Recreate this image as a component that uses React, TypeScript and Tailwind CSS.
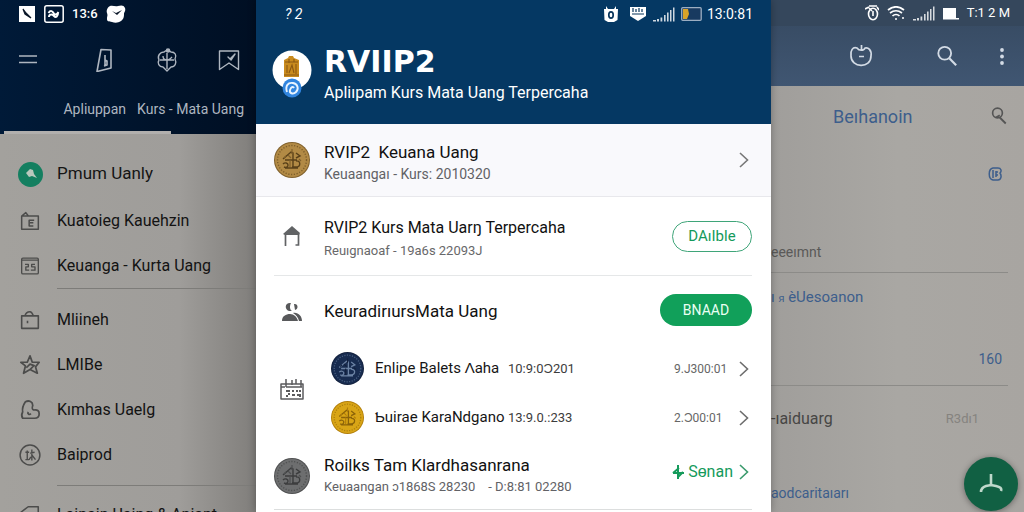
import type { ReactNode } from "react";

function Icon({ children, className = "size-6", box = 24 }: { children: ReactNode; className?: string; box?: number }) {
  return (
    <svg
      viewBox={`0 0 ${box} ${box}`}
      className={className}
      fill="none"
      stroke="currentColor"
      strokeWidth={1.6}
      strokeLinejoin="round"
      aria-hidden="true"
    >
      {children}
    </svg>
  );
}

function Signal() {
  return (
    <svg viewBox="0 0 22 15" className="h-[15px] w-[22px]" fill="currentColor" aria-hidden="true">
      <path d="M0 13h3v1.500H0zM4 12h2v2.500H4zM7.500 10.500h1.800v4H7.500zM11 8h1.600v6.500H11zM14 5.500h1.600v9H14zM17 3h1.500v11.500H17zM20 .5h1.500v14H20z" opacity=".8" />
    </svg>
  );
}

function Chevron({ className }: { className: string }) {
  return (
    <svg viewBox="0 0 10 16" className={`h-4 w-2.5 shrink-0 ${className}`} fill="none" stroke="currentColor" strokeWidth={1.6} aria-hidden="true">
      <path d="M1 1l7.500 7L1 15" />
    </svg>
  );
}

function Coin({ className, base, rim, ink }: { className: string; base: string; rim: string; ink: string }) {
  return (
    <svg viewBox="0 0 36 36" className={`shrink-0 ${className}`} fill="none" aria-hidden="true">
      <circle cx="18" cy="18" r="18" fill={rim} />
      <circle cx="18" cy="18" r="17" fill={base} />
      <circle cx="18" cy="18" r="14.500" stroke={ink} strokeWidth="1.400" strokeDasharray="1.200 1.600" opacity=".6" />
      <path d="M9 17l8-7 2 1v14M11 18h12M22 11l4 3-4 2M22 19c5-1 5 6 0 6h-4M9 22c2-2 5-1 5 1s-2 3-4 2M11 26h13" stroke={ink} strokeWidth="1.400" />
      <path d="M18 7v5M14 13l3 3M25 17l2 2M16 18v7M12 14l-2 2" stroke={rim} strokeWidth="1.200" />
    </svg>
  );
}

function MenuRow({ icon, label }: { icon: ReactNode; label: string }) {
  return (
    <li>
      <a href="#" className="flex h-[45px] items-center gap-4 whitespace-nowrap pl-[19px] text-[16px] text-[#131313]">
        <span className="flex w-[22px] justify-center text-[#4c4c4b]">{icon}</span>
        {label}
      </a>
    </li>
  );
}

function LeftPanel() {
  return (
    <aside className="min-w-0 overflow-hidden bg-linear-to-r from-[#a3a19d] via-[#9f9d9a] via-70% to-[#807e7b]">
      <header className="bg-linear-to-r from-[#001a38] to-[#000f23] text-[#aeb6c0]">
        <div className="flex h-7 items-center pl-[19px] text-white">
          <svg viewBox="0 0 16 16" className="size-4" aria-hidden="true">
            <path d="M0 0h16v16H0z" fill="#fff" />
            <path d="M4 3l3 4 5 5-6-4z" stroke="#0b1728" strokeWidth="1.200" fill="#0b1728" />
          </svg>
          <svg viewBox="0 0 20 18" className="ml-[9px] h-[18px] w-5" fill="none" stroke="#fff" aria-hidden="true">
            <rect x=".8" y=".8" width="18.400" height="16.400" rx="2" strokeWidth="1.500" />
            <path d="M4.500 8c2-3 4-2 5 0s3 2 5-1M5 12c0-3 3-3 5-1s4 0 4-3" strokeWidth="2" />
          </svg>
          <span className="ml-2 text-[13px] font-medium">13:6</span>
          <svg viewBox="0 0 20 18" className="ml-2 h-[18px] w-5" aria-hidden="true">
            <path d="M4 1c3-1 5 1 8 0s6-1 7 2-1 4-1 6 0 5-3 7-6 2-9 1-5 0-5-3 1-3 0-6S2 2 4 1z" fill="#fff" />
            <path d="M6 6l4 2 6-3-5 5z" fill="#0b1728" />
          </svg>
        </div>
        <nav className="flex h-16 items-center gap-[38px] pl-4 pr-[15px]">
          <button aria-label="Menu" className="mr-auto">
            <Icon>
              <path d="M3 8h18M3 14.500h18" />
            </Icon>
          </button>
          <button aria-label="Catatan">
            <Icon>
              <path d="M8 1.500l10 .5v18L4 23.500zM12 7v10M12 12l2 1v4l-3 1" />
            </Icon>
          </button>
          <button aria-label="Jelajah">
            <Icon>
              <path d="M9 4c2-2 5-2 7 0 4 0 6 3 4 7 2 4 0 8-4 8l-4 4-4-4c-4 0-6-4-4-7-2-4 1-8 5-8zM12 5v16M5 12h14M12 12c-3 0-4-2-4-4M12 12c3 0 4-2 5-3" strokeWidth="1.400" />
              <circle cx="13" cy="2.500" r="1.500" fill="currentColor" />
            </Icon>
          </button>
          <button aria-label="Simpan">
            <Icon>
              <path d="M2.500 3h19v18.500L12 15l-9.500 6.500zM11 9l2 2 5-5-4 6z" strokeWidth="1.400" />
            </Icon>
          </button>
        </nav>
        <div className="flex h-[42px] flex-col justify-between whitespace-nowrap">
          <div className="flex justify-end gap-[11px] pr-3 pt-1.5 text-[14px] leading-[22px]">
            <a href="#">Apliuppan</a>
            <a href="#">Kurs - Mata Uang</a>
          </div>
          <div className="ml-1 mr-[85px] h-[3px] bg-[#b1afad]" />
        </div>
      </header>
      <ul className="pt-4">
        <li>
          <a href="#" className="flex h-12 items-center gap-3.5 pl-[18px] text-[17px] text-[#151515]">
            <span className="flex size-[25px] items-center justify-center rounded-full bg-[#147f60]">
              <svg viewBox="0 0 12 12" className="size-3" fill="#b9c8bd" aria-hidden="true">
                <path d="M1 5l4-4 3 1 1 4 3 4-5-2-3 1z" />
              </svg>
            </span>
            Pmum Uanly
          </a>
        </li>
        <MenuRow
          label="Kuatoieg Kauehzin"
          icon={
            <Icon className="size-5">
              <path d="M2 6h20v16H2zM2 6l5-4 3 4M17 11h-6v7h5M12 14h4" strokeWidth="1.800" />
            </Icon>
          }
        />
        <MenuRow
          label="Keuanga - Kurta Uang"
          icon={
            <Icon className="size-5">
              <rect x="2" y="2.500" width="20" height="19" rx="1.500" />
              <path d="M2 5h20M6 10h4v3H7v4h4M18 10h-4v3h4v4h-5" strokeWidth="1.600" />
            </Icon>
          }
        />
      </ul>
      <hr className="ml-[57px] border-[#7d7c79]" />
      <ul className="pt-2">
        <MenuRow
          label="Mliineh"
          icon={
            <Icon className="size-5">
              <path d="M2 7h20v15H2zM6 7c1-5 4-5 6-5s3 2 4 5M9 13v3" strokeWidth="1.900" />
            </Icon>
          }
        />
        <MenuRow
          label="LMIBe"
          icon={
            <Icon className="size-[22px]">
              <path d="M12 2l2.500 7H22l-4 5 2 7-8-4-7 4 2-8-5-4h7zM8 15l4-4 5 2M12 17l5-5" strokeWidth="1.900" />
            </Icon>
          }
        />
        <MenuRow
          label="Kımhas Uaelg"
          icon={
            <Icon className="size-[22px]">
              <path d="M4 21c-2-3-1-5 0-7-1-5 1-8 3-11 4-2 8 0 8 4-1 3-1 4 1 5 4-1 6 1 6 4s-2 5-5 5zM10 14c-1 2 1 4 3 2" strokeWidth="1.900" />
            </Icon>
          }
        />
        <MenuRow
          label="Baiprod"
          icon={
            <Icon className="size-[22px]">
              <circle cx="12" cy="12" r="10.800" />
              <path d="M7 9h4M9 7v10M7 17h4M14 6v12M12 10l5-1M14 12l4 5M13 14l-2 3" strokeWidth="1.500" />
            </Icon>
          }
        />
      </ul>
      <hr className="ml-[57px] mt-2 border-[#7d7c79]" />
      <ul className="pt-1.5">
        <MenuRow
          label="Lainain Uaing & Aniant"
          icon={
            <Icon className="size-[22px]">
              <path d="M2 22V9l8-6h11v19z" strokeWidth="1.700" />
            </Icon>
          }
        />
      </ul>
    </aside>
  );
}

function SubRow({ coin, name, code, value }: { coin: ReactNode; name: string; code: string; value: string }) {
  return (
    <li className="flex h-[49px] items-center whitespace-nowrap">
      {coin}
      <span className="ml-[11px] w-[133px] text-[15px] text-[#161616]">{name}</span>
      <span className="text-[13px] text-[#3c3c3c]">{code}</span>
      <span className="ml-auto w-[52px] text-[12px] text-[#666]">{value}</span>
      <button aria-label={name} className="ml-[13px] mr-[3px]">
        <Chevron className="text-[#6d6d6d]" />
      </button>
    </li>
  );
}

function CenterPanel() {
  return (
    <main className="z-10 min-w-0 overflow-hidden bg-white shadow-[0_0_8px_rgba(0,0,0,0.3)]">
      <header className="h-[124px] bg-[#053863] text-white">
        <div className="flex h-7 items-center pl-[29px] pr-[18px]">
          <span className="text-[14px] italic">{"? 2"}</span>
          <svg viewBox="0 0 16 18" className="ml-auto h-[18px] w-4" aria-hidden="true">
            <path d="M1 4h2V1l2 3h6l2-3v3h2l-.5 11-3.500 2h-6L1.500 15z" fill="#fff" />
            <ellipse cx="8" cy="10" rx="2.200" ry="3.200" stroke="#08345b" strokeWidth="1.700" fill="none" />
          </svg>
          <svg viewBox="0 0 18 16" className="ml-2.5 h-4 w-[18px]" aria-hidden="true">
            <path d="M1 1h16v9l-8 5-8-5z" fill="#fff" />
            <path d="M4 2v4M7 3v3M10 2v4M13 3v3M3 8h12" stroke="#08345b" strokeWidth="1.200" />
          </svg>
          <span className="ml-1.5"><Signal /></span>
          <svg viewBox="0 0 22 14" className="ml-1.5 h-3.5 w-[22px]" aria-hidden="true">
            <rect x=".7" y=".7" width="19.500" height="12.600" rx="1" fill="#183a60" stroke="#9caec2" strokeWidth="1.300" />
            <path d="M2 2h5l1 5-2 5H2z" fill="#d9a328" />
          </svg>
          <span className="ml-1 text-[14px]">13:0:81</span>
        </div>
        <div className="flex gap-3 pl-4 pt-[17px]">
          <svg viewBox="0 0 40 54" className="h-[54px] w-10 shrink-0" aria-hidden="true">
            <circle cx="20" cy="25" r="19.500" fill="#fff" />
            <path d="M12 15l4-2 1-2h4l1 2 5 2v17H12z" fill="#c98b1e" />
            <path d="M13 17h13M15 28v-8M17 28l3-8 2 8M24 19v10M12 30h15M17 14v4M22 14v3" stroke="#8a5812" strokeWidth="1.100" fill="none" />
            <circle cx="20" cy="43" r="9.500" fill="#3185df" />
            <path d="M15 47c-2-6 1-10 6-9s6 6 3 9-7 1-6-2 3-4 4-2" stroke="#e9f4ff" strokeWidth="1.900" fill="none" />
          </svg>
          <div className="whitespace-nowrap">
            <h1 className="font-['DejaVu_Sans',sans-serif] text-[30px] font-bold leading-[34px]">RVIIP2</h1>
            <p className="mt-1 text-[16px] leading-5">Apliıpam Kurs Mata Uang Terpercaha</p>
          </div>
        </div>
      </header>

      <section className="flex h-[73px] items-center gap-3.5 border-b border-[#e8e8ec] bg-[#f9f9fc] pl-[18px] pr-[22px]">
        <Coin className="size-9" base="#b28a45" rim="#80602c" ink="#594019" />
        <div className="whitespace-nowrap pt-1.5">
          <h2 className="text-[17px] leading-[22px] text-[#111]">RVIP2&nbsp; Keuana Uang</h2>
          <p className="text-[14px] leading-[22px] text-[#626266]">Keuaangaı - Kurs: 2010320</p>
        </div>
        <button aria-label="Buka" className="ml-auto"><Chevron className="text-[#777]" /></button>
      </section>

      <div className="pl-[18px] pr-[19px]">
        <section className="flex h-[79px] items-center gap-3.5 border-b border-[#e5e7e8]">
          <span className="flex w-9 justify-center text-[#616365]">
            <svg viewBox="0 0 20 22" className="h-[22px] w-5" aria-hidden="true">
              <path d="M1 9l9-8 8 7-1 2H3z" fill="currentColor" />
              <path d="M3.500 9v12M16.500 9v11h-3" stroke="currentColor" strokeWidth="1.700" fill="none" />
            </svg>
          </span>
          <div className="whitespace-nowrap pt-1.5">
            <h2 className="text-[16px] leading-6 text-[#111]">RVIP2 Kurs Mata Uarŋ Terpercaha</h2>
            <p className="text-[13px] leading-[22px] text-[#68686a]">Reuıgnaoaf - 19а6s 22093J</p>
          </div>
          <button className="ml-auto h-[31px] w-20 rounded-full border border-[#3fa579] text-[15px] text-[#159a5b]">DAıIble</button>
        </section>

        <section className="flex h-[68px] items-center gap-3.5">
          <span className="flex w-9 justify-center pt-1 text-[#58595b]">
            <svg viewBox="0 0 22 20" className="h-5 w-[22px]" fill="currentColor" aria-hidden="true">
              <path d="M10 1c-6-1-7 6-2 8h3c-3-2-2-6-1-8zM13 2c4-1 5 5 1 6zM1 19c0-5 4-7 8-7s7 3 8 7zM12 11c5-1 9 3 9 8h-3c-1-4-3-6-6-8z" />
            </svg>
          </span>
          <h2 className="whitespace-nowrap pt-1 text-[17px] text-[#111]">KeuradirıursMata Uang</h2>
          <button className="ml-auto h-8 w-[92px] rounded-full bg-[#11a05a] text-[14px] text-[#eafff2]">BNAAD</button>
        </section>

        <section className="flex gap-[21px]">
          <span className="flex w-9 justify-center pt-[33px] text-[#5b5b5d]">
            <Icon className="size-6">
              <path d="M1 7h22v15H1zM1 10h4M6 10h16M6 2v8M12 3v5M16 2v5M21 3v7" strokeWidth="1.500" />
              <path d="M6 14h4M8 17h2M13 13v2M16 14h2M20 13v2M6 19h2M12 18h3M17 18h2M20 17v3" strokeWidth="2" />
            </Icon>
          </span>
          <ul className="grow">
            <SubRow coin={<Coin className="size-[33px]" base="#182c50" rim="#13213d" ink="#6c83a4" />} name="Enlipe Balets Ʌaha" code="10:9:0Ɔ201" value="9.J300:01" />
            <SubRow coin={<Coin className="size-[33px]" base="#d9a516" rim="#b17d08" ink="#8a6209" />} name="Ƅuirae KaraNdgano" code="13:9.0.:233" value="2.Ɔ00:01" />
          </ul>
        </section>

        <section className="flex h-[68px] items-center gap-3.5 border-b border-[#dcdede]">
          <Coin className="size-9" base="#6d6e6f" rim="#4e4f50" ink="#3c3d3e" />
          <div className="whitespace-nowrap">
            <h2 className="text-[17px] leading-[22px] text-[#111]">Roilks Tam Klardhasanrana</h2>
            <p className="text-[13px] leading-[22px] text-[#626266]">Keuaangan ɔ1868S 28230 &nbsp;&nbsp; - D:8:81 02280</p>
          </div>
          <button className="-mt-2 ml-auto mr-[3px] flex items-center text-[16px] text-[#159a5b]">
            <svg viewBox="0 0 12 14" className="mr-1 h-3.5 w-3" fill="none" stroke="currentColor" strokeWidth="2" aria-hidden="true">
              <path d="M6 0v14M1 8h11M7 3L1 8M11 7L6 12" />
            </svg>
            Sɵnan
            <span className="ml-1.5"><Chevron className="text-[#3a9a6c]" /></span>
          </button>
        </section>
      </div>
    </main>
  );
}

function RightPanel() {
  return (
    <aside className="relative min-w-0 overflow-hidden whitespace-nowrap bg-linear-to-r from-[#a09e9b] via-[#a9a7a3] to-[#a8a5a1] text-[#3d5e8c]">
      <header className="h-[86px] bg-linear-to-b from-[#35485f] to-[#405672] text-[#d3dbe5]">
        <div className="flex h-[26px] items-center justify-end gap-2 bg-[#35475c] pr-3.5 text-white">
          <svg viewBox="0 0 14 16" className="h-4 w-3.5" fill="none" stroke="#fff" strokeWidth="1.600" aria-hidden="true">
            <ellipse cx="8" cy="9" rx="4.500" ry="5.800" />
            <path d="M0 4l4-2M4 1h8M12 2l2 3M8 6v5M4 3l3 3" />
          </svg>
          <svg viewBox="0 0 18 14" className="h-3.5 w-[18px]" fill="none" stroke="#fff" strokeWidth="1.700" aria-hidden="true">
            <path d="M1 4c5-4 11-4 16 0M3 7c4-3 8-3 12 0M5.500 10c2-2 5-2 7 0M8 13h2M15 12h2" />
          </svg>
          <Signal />
          <svg viewBox="0 0 16 13" className="h-[13px] w-4" aria-hidden="true">
            <path d="M1 1h12v10h3v1.500H0V1z" fill="#fff" />
          </svg>
          <span className="text-[13px]">T:1 2 M</span>
        </div>
        <nav className="flex h-[60px] items-center justify-end pr-2.5">
          <button aria-label="Segarkan">
            <Icon className="size-6">
              <path d="M8 4C4 2 1 7 2 12c0 12 20 13 20 0 1-6-3-9-6-8-1 3-6 3-8 0zM12.500 1v6M10 12.500h5" strokeWidth="1.700" />
            </Icon>
          </button>
          <button aria-label="Cari" className="ml-[63px]">
            <Icon className="size-[22px]">
              <circle cx="9.500" cy="9" r="7" strokeWidth="2" />
              <path d="M14.500 14.500L22 22" strokeWidth="2.400" />
            </Icon>
          </button>
          <button aria-label="Lainnya" className="ml-8">
            <svg viewBox="0 0 24 24" className="size-6" fill="currentColor" aria-hidden="true">
              <circle cx="12" cy="6" r="1.900" />
              <circle cx="12" cy="12.500" r="1.900" />
              <circle cx="12" cy="19" r="1.900" />
            </svg>
          </button>
        </nav>
      </header>
      <div className="mr-4 flex h-[187px] flex-col border-b border-[#8c8b88]">
        <div className="flex h-[60px] items-center justify-between pl-[62px]">
          <h2 className="text-[18px]">Beıhanoin</h2>
          <button aria-label="Cari di daftar" className="text-[#555]">
            <Icon className="size-[18px]">
              <circle cx="10" cy="8" r="6.500" strokeWidth="2.200" />
              <path d="M13 14l8 8M8 14l5-3" strokeWidth="2.400" />
            </Icon>
          </button>
        </div>
        <div className="flex h-14 items-center justify-end pr-1.5">
          <svg viewBox="0 0 14 14" className="size-3.5" fill="none" stroke="currentColor" strokeWidth="1.500" aria-hidden="true">
            <path d="M5 1h5c3 0 4 3 2 5 2 3 1 7-2 7H5C0 12 0 2 5 1zM5 3v8M8 4v6M8 5h2M8 8h2" />
          </svg>
        </div>
        <p className="mt-auto pb-2 text-[14px] leading-6 text-[#5a5958]">eeeımnt</p>
      </div>
      <div className="mr-4 flex h-[113px] flex-col justify-between border-b border-[#8c8b88] pb-4 pt-3">
        <a href="#" className="text-[15px] leading-6">ı <span className="text-[11px]">ᴙ</span> èUesoanon</a>
        <span className="self-end pr-1.5 text-[14px] leading-5">160</span>
      </div>
      <div className="flex h-[66px] items-center justify-between pr-[45px]">
        <span className="text-[16px] text-[#474645]">-ıaiduarg</span>
        <span className="text-[13px] text-[#85837f]">R3dı1</span>
      </div>
      <a href="#" className="block pt-[29px] text-[14px] leading-6">aodcaritaıarı</a>
      <button aria-label="Tambah" className="absolute bottom-px right-[6px] flex size-[54px] items-center justify-center rounded-full bg-[#116043] text-[#bfd8cb] shadow-[0_1px_6px_rgba(0,0,0,0.4)]">
        <svg viewBox="0 0 24 24" className="size-6" fill="none" stroke="currentColor" strokeWidth="2.600" aria-hidden="true">
          <path d="M12 2v11M2 20c0-3 2-5 5-6l5-1 5 1c4 1 6 2 5 5" />
        </svg>
      </button>
    </aside>
  );
}

export default function App() {
  return (
    <div className="grid h-screen grid-cols-[256fr_515fr_253fr] overflow-hidden font-[Roboto,'Liberation_Sans',sans-serif]">
      <LeftPanel />
      <CenterPanel />
      <RightPanel />
    </div>
  );
}
